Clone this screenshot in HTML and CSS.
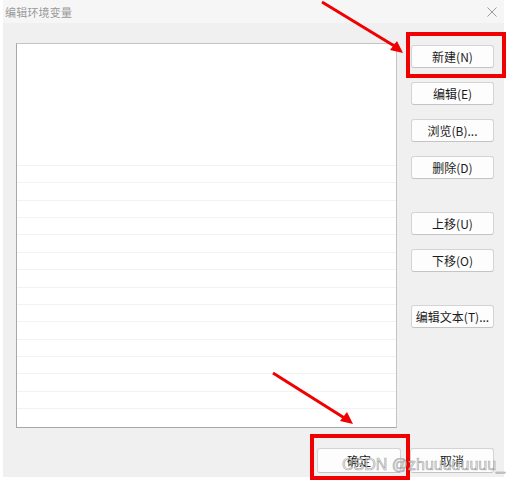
FILE: index.html
```html
<!DOCTYPE html>
<html lang="zh-CN">
<head>
    <meta charset="UTF-8">
    <title>编辑环境变量</title>
    <link rel="stylesheet" href="styles.css">
</head>
<body>
    <div class="dialog">
        <div class="title-bar">
            <span class="title">编辑环境变量</span>
            <svg class="close" width="10" height="10" viewBox="0 0 10 10">
                <path d="M0.5 0.5 L9.5 9.5 M9.5 0.5 L0.5 9.5" stroke="#9c9c9c" stroke-width="1" fill="none"/>
            </svg>
        </div>
        <div class="dialog-body">
            <div class="main-row">
                <div class="var-list">
                    <div class="row"></div>
                    <div class="row"></div>
                    <div class="row"></div>
                    <div class="row"></div>
                    <div class="row"></div>
                    <div class="row"></div>
                    <div class="row"></div>
                    <div class="row"></div>
                    <div class="row"></div>
                    <div class="row"></div>
                    <div class="row"></div>
                    <div class="row"></div>
                    <div class="row"></div>
                    <div class="row"></div>
                    <div class="row"></div>
                </div>
                <div class="side-buttons">
                    <button class="btn">新建(N)</button>
                    <button class="btn">编辑(E)</button>
                    <button class="btn">浏览(B)...</button>
                    <button class="btn">删除(D)</button>
                    <button class="btn group-start">上移(U)</button>
                    <button class="btn">下移(O)</button>
                    <button class="btn group-start">编辑文本(T)...</button>
                </div>
            </div>
            <div class="footer">
                <button class="btn">确定</button>
                <button class="btn">取消</button>
            </div>
        </div>
    </div>

    <!-- annotations drawn on top of the screenshot -->
    <div class="mark mark-new"></div>
    <div class="mark mark-ok"></div>
    <svg class="arrows" width="516" height="490" viewBox="0 0 516 490">
        <g stroke="#f00000" stroke-width="3" fill="#f00000">
            <line x1="322" y1="2" x2="396" y2="47"/>
            <polygon points="403,53 390,50 397,41" stroke="none"/>
            <line x1="273" y1="373" x2="346" y2="419"/>
            <polygon points="353,424 340,421 347,412" stroke="none"/>
        </g>
    </svg>
    <div class="watermark">CSDN @zhuuuuuuuu_</div>
</body>
</html>
```

FILE: styles.css
```css
body {
    margin: 0;
    background: #ffffff;
    font-family: "Noto Sans CJK SC", "Noto Sans", sans-serif;
    position: relative;
    width: 516px;
    height: 490px;
    overflow: hidden;
}

.dialog {
    margin-left: 3px;
    width: 501px;
    height: 477px;
    background: #f0f0f0;
}

.title-bar {
    height: 23px;
    background: #f6f6f6;
    display: flex;
    align-items: center;
    justify-content: space-between;
    padding: 0 7px 0 2px;
}

.title {
    font-size: 11px;
    color: #9a9a9a;
    letter-spacing: 0.2px;
}

.dialog-body {
    padding: 20px 10px 0 13px;
}

.main-row {
    display: flex;
}

.var-list {
    width: 381px;
    height: 385px;
    box-sizing: border-box;
    background: #ffffff;
    border: 1px solid #c4c4c4;
    border-left-color: #a8a8a8;
    border-bottom-color: #a8a8a8;
    padding-top: 121px;
}

.row {
    height: 17.36px;
    box-sizing: border-box;
    border-top: 1px solid #f2f2f2;
}

.side-buttons {
    display: flex;
    flex-direction: column;
    gap: 14px;
    margin-left: 14px;
    padding-top: 2px;
}

.btn {
    width: 83px;
    height: 23px;
    padding: 0;
    background: #fdfdfd;
    border: 1px solid #d4d4d4;
    border-bottom-color: #c4c4c4;
    border-radius: 3px;
    font-family: inherit;
    font-size: 12px;
    color: #1b1b1b;
}

.side-buttons .group-start {
    margin-top: 19px;
}

.footer {
    display: flex;
    justify-content: flex-end;
    gap: 9px;
    margin-top: 20px;
}

.footer .btn {
    width: 84px;
    height: 25px;
}

.mark {
    position: absolute;
    border: 4px solid #f00000;
    box-sizing: border-box;
}

.mark-new {
    left: 406px;
    top: 32px;
    width: 100px;
    height: 46px;
}

.mark-ok {
    left: 310px;
    top: 434px;
    width: 100px;
    height: 46px;
}

.arrows {
    position: absolute;
    left: 0;
    top: 0;
}

.watermark {
    position: absolute;
    left: 342px;
    top: 456px;
    font-family: "Liberation Sans", Arial, sans-serif;
    font-size: 16px;
    color: rgba(235, 235, 235, 0.7);
    -webkit-text-stroke: 0.6px rgba(120, 120, 120, 0.7);
    white-space: nowrap;
}
```
